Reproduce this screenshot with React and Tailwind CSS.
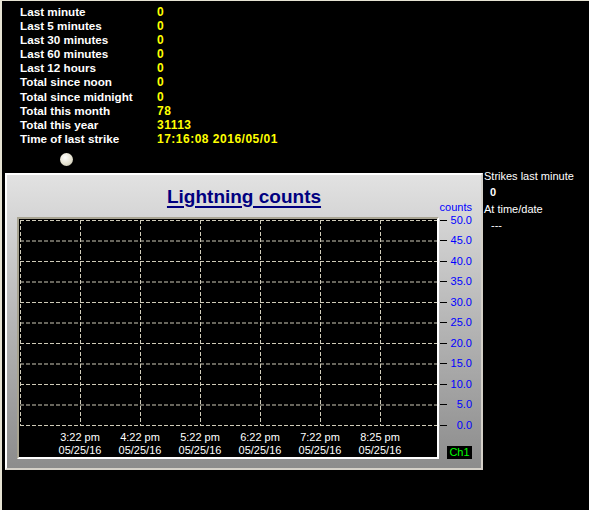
const stats = [
  ["Last minute", "0"],
  ["Last 5 minutes", "0"],
  ["Last 30 minutes", "0"],
  ["Last 60 minutes", "0"],
  ["Last 12 hours", "0"],
  ["Total since noon", "0"],
  ["Total since midnight", "0"],
  ["Total this month", "78"],
  ["Total this year", "31113"],
  ["Time of last strike", "17:16:08 2016/05/01"],
];

const yLabels = ["50.0", "45.0", "40.0", "35.0", "30.0", "25.0", "20.0", "15.0", "10.0", "5.0", "0.0"];
const times = ["3:22 pm", "4:22 pm", "5:22 pm", "6:22 pm", "7:22 pm", "8:25 pm"];

function Grid() {
  // grid drawn relative to the black plot area (origin at x=19, y=219)
  const xs = [1, 61, 121, 181, 241, 301, 361];
  const ys = yLabels.map((_, i) => 1.5 + i * 20.5);
  return (
    <svg width="418" height="210" className="block">
      {ys.map((y) => (
        <line key={y} x1="1" x2="418" y1={y} y2={y} stroke="#cfcbb8" strokeWidth="1" strokeDasharray="4 2" />
      ))}
      {xs.map((x) => (
        <line key={x} x1={x + 0.5} x2={x + 0.5} y1="1" y2="206.5" stroke="#cfcbb8" strokeWidth="1" strokeDasharray="4 2" />
      ))}
    </svg>
  );
}

export default function App() {
  return (
    <div className="w-[589px] h-[510px] overflow-hidden bg-black border-t border-l-2 border-[#e6e3d3] font-['Liberation_Sans',Arial,sans-serif] text-[11px] text-white">
      <div className="pl-[18px] pt-[4px]">
        {stats.map(([label, value]) => (
          <div key={label} className="flex h-[14.1px] leading-[14.1px] font-bold">
            <span className="w-[137px] text-[11.7px]">{label}</span>
            <span className="text-[12px] tracking-[0.5px] text-[#ffff00]">{value}</span>
          </div>
        ))}
      </div>

      <div className="ml-[58px] mt-[7px] h-[13px] w-[13px] rounded-full bg-[radial-gradient(circle_at_40%_35%,#ffffff,#e4e1cf_55%,#b9b6a4)]" />

      <div className="mt-[2px] ml-[3px] flex items-start">
        <div className="mt-[5px] w-[478px] h-[297px] border-2 border-t-white border-l-white border-r-[#d4d0c8] border-b-[#d4d0c8] bg-gradient-to-b from-[#e2e2e2] to-[#8c8c8c]">
          <div className="h-[42px] flex items-center justify-center pt-[2px]">
            <span className="text-[19px] font-bold underline underline-offset-[3px] decoration-2 text-[#000080]">Lightning counts</span>
          </div>
          <div className="flex items-start">
            <div className="ml-[10px] w-[422px] h-[242px] border-2 border-t-[#a8a492] border-l-[#a8a492] border-r-white border-b-white bg-black">
              <Grid />
              <div className="flex pl-[31px] pt-[2px] text-[11px] leading-[13px]">
                {times.map((t) => (
                  <div key={t} className="w-[60px] text-center">
                    <div>{t}</div>
                    <div>05/25/16</div>
                  </div>
                ))}
              </div>
            </div>
            <div className="w-[33px] -mt-[16px] flex flex-col text-[11px] text-[#0000ff]">
              <div className="h-[9px] leading-[12px] text-right">counts</div>
              {yLabels.map((v) => (
                <div key={v} className="h-[20.5px] flex items-center">
                  <div className="ml-[1px] w-[7px] h-px bg-black" />
                  <div className="flex-1 text-right">{v}</div>
                </div>
              ))}
              <div className="mt-[10.5px] ml-[8px] w-[25px] h-[13px] bg-black text-[#00ff00] leading-[13px] text-center">Ch1</div>
            </div>
          </div>
        </div>
        <div className="ml-px leading-[16.3px]">
          <div>Strikes last minute</div>
          <div className="pl-[6px] font-bold">0</div>
          <div>At time/date</div>
          <div className="pl-[7px]">---</div>
        </div>
      </div>
    </div>
  );
}
